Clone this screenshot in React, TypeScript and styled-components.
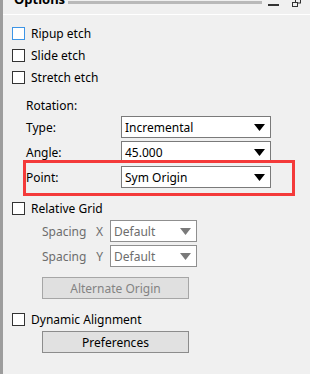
import React from "react";
import styled, { createGlobalStyle } from "styled-components";

const GlobalStyle = createGlobalStyle`
  html, body {
    margin: 0;
    padding: 0;
    background: #f0f0f0;
  }
  body {
    font-family: "Noto Sans", "Open Sans", sans-serif;
    font-size: 12px;
    color: #000;
  }
`;

const Panel = styled.div`
  box-sizing: border-box;
  width: 310px;
  height: 374px;
  display: flex;
  flex-direction: column;
  border-left: 3px solid #9d9d9d;
  background: #f0f0f0;
  overflow: hidden;
`;

const Header = styled.div`
  height: 14px;
  display: flex;
  align-items: flex-start;
  border-bottom: 1px solid #ffffff;
  overflow: hidden;
`;

const Title = styled.div`
  font-weight: bold;
  font-size: 13px;
  line-height: 16px;
  margin-top: -9px;
  padding-left: 11px;
`;

const Gripper = styled.div`
  flex: 1;
  height: 3px;
  margin: 1px 0 0 3px;
  background: #b9b9b9;
`;

const HeaderIcons = styled.div`
  display: flex;
  align-items: flex-start;
  gap: 13px;
  padding: 0 9px 0 6px;
`;

const Body = styled.div`
  display: flex;
  flex-direction: column;
  padding: 7px 0 0 9px;
`;

const CheckRow = styled.label<{ $mt?: number }>`
  height: 22px;
  display: flex;
  align-items: center;
  gap: 6px;
  margin-top: ${(p) => p.$mt ?? 0}px;
`;

const Box = styled.span<{ $focus?: boolean }>`
  box-sizing: border-box;
  width: 13px;
  height: 13px;
  background: #fff;
  border: 1px solid ${(p) => (p.$focus ? "#3d95e6" : "#333333")};
`;

const Section = styled.div`
  display: flex;
  flex-direction: column;
  margin-left: 14px;
`;

const FieldRow = styled.div<{ $mt?: number }>`
  position: relative;
  height: 22px;
  display: flex;
  align-items: center;
  margin-top: ${(p) => p.$mt ?? 0}px;
`;

const FieldLabel = styled.span`
  width: 95px;
`;

const Highlight = styled.div`
  position: absolute;
  left: -3px;
  width: 272px;
  top: -6px;
  bottom: -8px;
  box-sizing: border-box;
  border: 3px solid #f43a3a;
  pointer-events: none;
`;

const Select = styled.div<{ $w: number; $disabled?: boolean }>`
  box-sizing: border-box;
  width: ${(p) => p.$w}px;
  height: 22px;
  display: flex;
  align-items: center;
  justify-content: space-between;
  padding: 0 5px 0 3px;
  background: #fff;
  border: 1px solid ${(p) => (p.$disabled ? "#8f8f8f" : "#7a7a7a")};
  color: ${(p) => (p.$disabled ? "#6d6d6d" : "#000")};
`;

const Sub = styled.div`
  display: flex;
  flex-direction: column;
  margin-left: 30px;
`;

const SpacingLabel = styled.span`
  box-sizing: border-box;
  color: #6d6d6d;
  width: 68px;
  display: flex;
  justify-content: space-between;
  padding-right: 7px;
`;

const Button = styled.div<{ $disabled?: boolean; $mt?: number }>`
  box-sizing: border-box;
  width: 147px;
  height: 22px;
  margin-top: ${(p) => p.$mt ?? 0}px;
  display: flex;
  align-items: center;
  justify-content: center;
  background: ${(p) => (p.$disabled ? "#e0e0e0" : "#e1e1e1")};
  border: 1px solid ${(p) => (p.$disabled ? "#a6a6a6" : "#8c8c8c")};
  color: ${(p) => (p.$disabled ? "#838383" : "#000")};
`;

function Arrow({ disabled }: { disabled?: boolean }) {
  return (
    <svg width="11" height="7" viewBox="0 0 11 7">
      <polygon points="0,0 11,0 5.5,7" fill={disabled ? "#7a7a7a" : "#000"} />
    </svg>
  );
}

function Dropdown({ value, width, disabled }: { value: string; width: number; disabled?: boolean }) {
  return (
    <Select $w={width} $disabled={disabled}>
      <span>{value}</span>
      <Arrow disabled={disabled} />
    </Select>
  );
}

function Check({ text, focus, mt }: { text: string; focus?: boolean; mt?: number }) {
  return (
    <CheckRow $mt={mt}>
      <Box $focus={focus} />
      <span>{text}</span>
    </CheckRow>
  );
}

export default function App() {
  return (
    <>
      <GlobalStyle />
      <Panel>
        <Header>
          <Title>Options</Title>
          <Gripper />
          <HeaderIcons>
            <svg width="11" height="7" viewBox="0 0 11 7">
              <rect x="0" y="4" width="11" height="2" fill="#333" />
            </svg>
            <svg width="9" height="7" viewBox="0 0 9 7">
              <rect x="3.5" y="-1" width="5" height="4" fill="none" stroke="#333" />
              <rect x="0.5" y="2.5" width="5" height="4" fill="#f0f0f0" stroke="#333" />
            </svg>
          </HeaderIcons>
        </Header>
        <Body>
          <Check text="Ripup etch" focus />
          <Check text="Slide etch" />
          <Check text="Stretch etch" />
          <Section>
            <FieldRow $mt={6}>Rotation:</FieldRow>
            <FieldRow>
              <FieldLabel>Type:</FieldLabel>
              <Dropdown value="Incremental" width={150} />
            </FieldRow>
            <FieldRow $mt={3}>
              <FieldLabel>Angle:</FieldLabel>
              <Dropdown value="45.000" width={150} />
            </FieldRow>
            <FieldRow $mt={3}>
              <FieldLabel>Point:</FieldLabel>
              <Dropdown value="Sym Origin" width={150} />
              <Highlight />
            </FieldRow>
          </Section>
          <Check text="Relative Grid" mt={9} />
          <Sub>
            <FieldRow $mt={1}>
              <SpacingLabel>
                <span>Spacing</span>
                <span>X</span>
              </SpacingLabel>
              <Dropdown value="Default" width={87} disabled />
            </FieldRow>
            <FieldRow $mt={3}>
              <SpacingLabel>
                <span>Spacing</span>
                <span>Y</span>
              </SpacingLabel>
              <Dropdown value="Default" width={87} disabled />
            </FieldRow>
            <Button $disabled $mt={10}>Alternate Origin</Button>
          </Sub>
          <Check text="Dynamic Alignment" mt={9} />
          <Sub>
            <Button $mt={1}>Preferences</Button>
          </Sub>
        </Body>
      </Panel>
    </>
  );
}
